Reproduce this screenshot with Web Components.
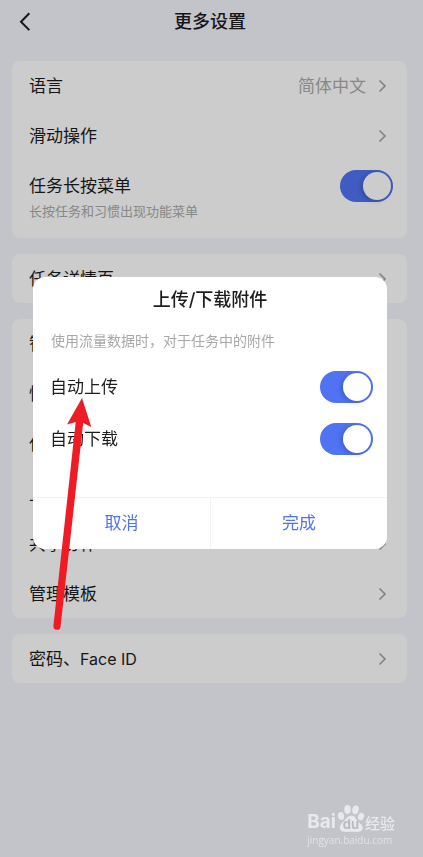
<!DOCTYPE html>
<html lang="zh-CN">
<head>
<meta charset="utf-8">
<meta name="viewport" content="width=device-width, initial-scale=1">
<title>更多设置</title>
<style>
  body {
    margin: 0;
    background: #f4f5fd;
    color: #1c1c1c;
    font-family: Inter, "Noto Sans CJK SC", sans-serif;
    font-size: 17px;
  }
  .latin { font-size: 16px; }
</style>
</head>
<body>
<settings-page>
  <page-header slot="header">更多设置</page-header>
  <settings-card>
    <link-row value="简体中文">语言</link-row>
    <link-row>滑动操作</link-row>
    <switch-row note="长按任务和习惯出现功能菜单">任务长按菜单</switch-row>
  </settings-card>
  <settings-card>
    <link-row>任务详情页</link-row>
  </settings-card>
  <settings-card>
    <link-row>智能识别</link-row>
    <link-row>快速添加</link-row>
    <link-row>任务默认设置</link-row>
    <link-row>上传/下载附件</link-row>
    <link-row>共享协作</link-row>
    <link-row>管理模板</link-row>
  </settings-card>
  <settings-card>
    <link-row>密码、<span class="latin">Face ID</span></link-row>
  </settings-card>
</settings-page>
<modal-dialog heading="上传/下载附件" hint="使用流量数据时，对于任务中的附件">
  <switch-row>自动上传</switch-row>
  <switch-row>自动下载</switch-row>
</modal-dialog>
<pointer-arrow></pointer-arrow>
<site-mark></site-mark>

<script>
class Base extends HTMLElement {
  constructor() {
    super();
    this.attachShadow({ mode: 'open' });
  }
  connectedCallback() {
    this.shadowRoot.innerHTML = `<style>*{box-sizing:border-box}${this.css()}</style>${this.html()}`;
  }
}

customElements.define('settings-page', class extends Base {
  css() { return `
    :host { display: block; min-height: 100vh; padding-right: 3px; box-sizing: border-box; }
    main { display: flex; flex-direction: column; gap: 16px; padding: 17px 13px 17px 12px; }`; }
  html() { return `<slot name="header"></slot><main><slot></slot></main>`; }
});

customElements.define('page-header', class extends Base {
  css() { return `
    :host { display: block; }
    header { display: grid; grid-template-columns: 44px 1fr 44px; align-items: center; height: 44px; }
    button { border: 0; background: none; padding: 0 0 0 19px; height: 44px; color: inherit; display: flex; align-items: center; }
    h1 { margin: 0; font-size: 18px; line-height: 24px; font-weight: 500; text-align: center; }`; }
  html() { return `<header>
    <button aria-label="返回"><svg width="12" height="20" viewBox="0 0 12 20" fill="none" stroke="currentColor" stroke-width="2"><path d="M10.300 1.300 2 9.700 10.300 18.100"/></svg></button>
    <h1><slot></slot></h1></header>`; }
});

customElements.define('settings-card', class extends Base {
  css() { return `
    :host { display: flex; flex-direction: column; gap: 1px; background: #fff; border-radius: 8px; }`; }
  html() { return `<slot></slot>`; }
});

customElements.define('link-row', class extends Base {
  css() { return `
    :host { display: block; }
    a { display: flex; align-items: center; height: 49px; padding: 0 20px 0 17px; color: inherit; text-decoration: none; line-height: 24px; }
    .label { flex: 1; }
    .value { color: #aaa; margin-right: 12px; }
    svg { display: block; }`; }
  html() { return `<a href="#"><span class="label"><slot></slot></span>
    ${this.hasAttribute('value') ? `<span class="value">${this.getAttribute('value')}</span>` : ''}
    <svg width="9" height="14" viewBox="0 0 9 14" fill="none" stroke="#a2a2a2" stroke-width="1.600"><path d="M1.500 1.500 7 7 1.500 12.500"/></svg></a>`; }
});

customElements.define('switch-row', class extends Base {
  css() { return `
    :host { display: block; }
    label { display: flex; align-items: flex-start; justify-content: space-between; min-height: 52px; padding: 10px 14px 10px 17px; line-height: 32px; }
    label.noted { min-height: 77px; padding-top: 9px; padding-bottom: 0; }
    .note { display: block; font-size: 13px; line-height: 18px; color: #aaa; }
    input { appearance: none; margin: 0; flex: none; width: 53px; height: 32px; padding: 2px; border-radius: 16px; background: #5073f3; display: flex; justify-content: flex-end; }
    input::before { content: ""; width: 28px; height: 28px; border-radius: 50%; background: #fff; box-shadow: -2px 1px 5px rgba(0,0,0,.2); }
    input:not(:checked) { background: #d9d9d9; justify-content: flex-start; }`; }
  html() {
    const note = this.getAttribute('note');
    return `<label class="${note ? 'noted' : ''}"><span><slot></slot>${note ? `<span class="note">${note}</span>` : ''}</span><input type="checkbox" role="switch" checked></label>`;
  }
});

customElements.define('modal-dialog', class extends Base {
  css() { return `
    :host { position: fixed; inset: 0; display: flex; align-items: center; padding: 0 36px 31px 33px; box-sizing: border-box; background: rgba(0,0,0,.2); }
    section { flex: 1; background: #fff; border-radius: 12px; overflow: hidden; }
    h2 { margin: 0; padding-top: 10px; font-size: 18px; line-height: 26px; font-weight: 500; text-align: center; }
    p { margin: 0; padding: 18px 18px 10px; font-size: 14px; line-height: 20px; color: #a8a8a8; }
    footer { display: grid; grid-template-columns: 1fr 1fr; margin-top: 32px; border-top: 1px solid #f3f3f3; }
    button { height: 51px; border: 0; padding: 0 0 4px; background: none; color: #5073f3; font: inherit; }
    button + button { border-left: 1px solid #f3f3f3; }`; }
  html() { return `<section role="dialog" aria-modal="true" aria-labelledby="t">
    <h2 id="t">${this.getAttribute('heading')}</h2>
    <p>${this.getAttribute('hint')}</p>
    <slot></slot>
    <footer><button>取消</button><button>完成</button></footer></section>`; }
});

customElements.define('pointer-arrow', class extends Base {
  css() { return `
    :host { position: absolute; left: 50px; top: 396px; pointer-events: none; }
    svg { display: block; }`; }
  html() { return `<svg width="46" height="236" viewBox="0 0 46 236" fill="#ee1c25"><path d="M32 2 41.300 31 33.200 27 10.600 230.500A3.600 3.600 0 0 1 3.400 230L25.700 26 17 28.500Z"/></svg>`; }
});

customElements.define('site-mark', class extends Base {
  css() { return `
    :host { position: fixed; right: 28px; bottom: 10px; color: #e9e9ed; }
    .logo { display: flex; align-items: flex-end; justify-content: flex-end; height: 29px; }
    .bai { font: 700 19px/22px Inter, sans-serif; margin-right: 1px; }
    .paw { position: relative; width: 28px; height: 29px; }
    .paw svg { display: block; }
    .du { position: absolute; left: 0; right: 0; bottom: 0; text-align: center; font: 700 13px/17px Inter, sans-serif; color: #b9bac1; }
    .cn { font: 500 15px/20px "Noto Sans CJK SC", sans-serif; }
    .url { font: 10px/14px "Open Sans", sans-serif; color: #e2e2e6; }`; }
  html() { return `<div class="logo"><span class="bai">Bai</span><span class="paw">
    <svg width="28" height="29" viewBox="0 0 28 29" fill="currentColor"><ellipse cx="4" cy="12" rx="3" ry="3.900" transform="rotate(-12 4 12)"/><ellipse cx="10.500" cy="5.500" rx="3.200" ry="4.400"/><ellipse cx="18.500" cy="5.800" rx="3.200" ry="4.400" transform="rotate(10 18.500 5.800)"/><ellipse cx="24.200" cy="12.500" rx="3" ry="3.800" transform="rotate(20 24 12)"/><path d="M14.500 11.500C10.500 11.500 9 15.500 6 18S2 24 3.500 26 8 28 14 27.800 23 29 25 26 24.500 20.500 21.500 18 18.500 11.500 14.500 11.500Z"/></svg>
    <span class="du">du</span></span><span class="cn">经验</span></div>
    <div class="url">jingyan.baidu.com</div>`; }
});
</script>
</body>
</html>
